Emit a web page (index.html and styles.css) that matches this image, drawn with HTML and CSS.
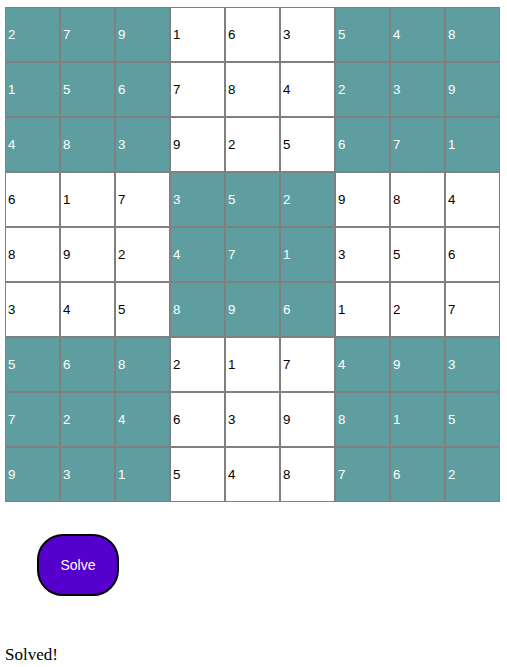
FILE: index.html
```html
<!DOCTYPE html>
<html>
<head>
<meta charset="utf-8">
<link rel="stylesheet" href="styles.css">
</head>
<body>
<div class="board">
<div class="cell dark">2</div><div class="cell dark">7</div><div class="cell dark">9</div><div class="cell">1</div><div class="cell">6</div><div class="cell">3</div><div class="cell dark">5</div><div class="cell dark">4</div><div class="cell dark">8</div>
<div class="cell dark">1</div><div class="cell dark">5</div><div class="cell dark">6</div><div class="cell">7</div><div class="cell">8</div><div class="cell">4</div><div class="cell dark">2</div><div class="cell dark">3</div><div class="cell dark">9</div>
<div class="cell dark">4</div><div class="cell dark">8</div><div class="cell dark">3</div><div class="cell">9</div><div class="cell">2</div><div class="cell">5</div><div class="cell dark">6</div><div class="cell dark">7</div><div class="cell dark">1</div>
<div class="cell">6</div><div class="cell">1</div><div class="cell">7</div><div class="cell dark">3</div><div class="cell dark">5</div><div class="cell dark">2</div><div class="cell">9</div><div class="cell">8</div><div class="cell">4</div>
<div class="cell">8</div><div class="cell">9</div><div class="cell">2</div><div class="cell dark">4</div><div class="cell dark">7</div><div class="cell dark">1</div><div class="cell">3</div><div class="cell">5</div><div class="cell">6</div>
<div class="cell">3</div><div class="cell">4</div><div class="cell">5</div><div class="cell dark">8</div><div class="cell dark">9</div><div class="cell dark">6</div><div class="cell">1</div><div class="cell">2</div><div class="cell">7</div>
<div class="cell dark">5</div><div class="cell dark">6</div><div class="cell dark">8</div><div class="cell">2</div><div class="cell">1</div><div class="cell">7</div><div class="cell dark">4</div><div class="cell dark">9</div><div class="cell dark">3</div>
<div class="cell dark">7</div><div class="cell dark">2</div><div class="cell dark">4</div><div class="cell">6</div><div class="cell">3</div><div class="cell">9</div><div class="cell dark">8</div><div class="cell dark">1</div><div class="cell dark">5</div>
<div class="cell dark">9</div><div class="cell dark">3</div><div class="cell dark">1</div><div class="cell">5</div><div class="cell">4</div><div class="cell">8</div><div class="cell dark">7</div><div class="cell dark">6</div><div class="cell dark">2</div>
</div>
<button class="solve">Solve</button>
<p class="status">Solved!</p>
</body>
</html>
```
FILE: styles.css
```css
body {
  margin: 0;
  font-family: "Liberation Serif", serif;
  font-size: 16px;
}
.board {
  display: grid;
  grid-template-columns: repeat(9, 55px);
  grid-auto-rows: 55px;
  margin: 7px 0 0 5px;
  width: 495px;
}
.cell {
  box-sizing: border-box;
  border: 1px solid #808080;
  background: #fff;
  color: #000;
  display: flex;
  align-items: center;
  padding-left: 2px;
  font-family: "Liberation Sans", Arial, sans-serif;
  font-size: 13.33px;
}
.cell.dark {
  background: #5f9ea0;
  color: #fff;
}
.solve {
  display: block;
  box-sizing: border-box;
  margin: 32px 0 0 37px;
  width: 82px;
  height: 62px;
  border: 2px solid #000;
  border-radius: 26px;
  background: #5500cc;
  color: #fff;
  font-family: "Liberation Sans", Arial, sans-serif;
  font-size: 14px;
  padding: 0;
}
.status {
  margin: 49px 0 0 5px;
  font-size: 17px;
  line-height: 20px;
}
```
